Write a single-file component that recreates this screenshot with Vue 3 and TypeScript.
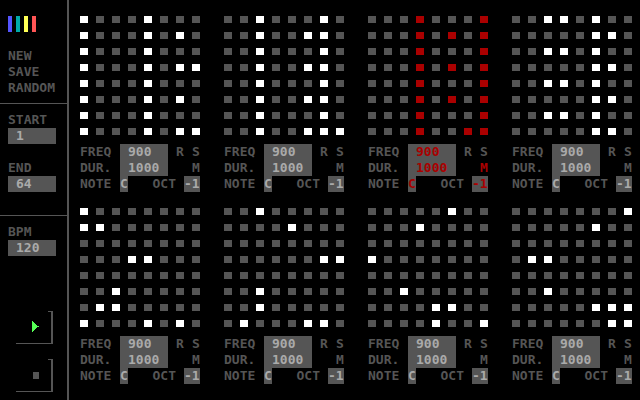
<script setup lang="ts">
import { reactive, ref } from 'vue'

interface Track {
  steps: boolean[][]
  freq: string
  duration: string
  note: string
  octave: string
  muted: boolean
}

const patterns: string[][] = [
  ['x...x...', 'x...x.x.', 'x...x...', 'x...x.xx', 'x...x...', 'x...x.x.', 'x...x...', 'x...x.xx'],
  ['..x...x.', '..x..xx.', '..x...x.', '..x..xx.', '..x...x.', '..x..xx.', '..x...x.', '..x..xxx'],
  ['...x...x', '...x.x.x', '...x...x', '...x.x.x', '...x...x', '...x.x.x', '...x...x', '...x..xx'],
  ['..xx.x..', '.....xx.', '..xx.x..', '.....xx.', '..xx.x..', '.....xx.', '..xx.x..', '.....xx.'],
  ['x.......', 'xx......', '........', '...xx...', '........', '..x.....', '.xx.....', 'x...x.x.'],
  ['..x.....', '....x...', '........', '......xx', '........', '..x.....', '..x.....', '.x...xx.'],
  ['.....x..', '...x....', '........', 'x.......', '........', '..x.....', '....xx..', '....x..x'],
  ['.......x', '.....x..', '........', '.xx.....', '........', '..x.....', '.....xxx', '......xx'],
]

const tracks = reactive<Track[]>(
  patterns.map((rows, i) => ({
    steps: rows.map((row) => [...row].map((c) => c === 'x')),
    freq: '900',
    duration: '1000',
    note: 'C',
    octave: '-1',
    muted: i === 2,
  })),
)

const start = ref('1')
const end = ref('64')
const bpm = ref('120')
const playing = ref(true)

function fill(track: Track, value: () => boolean) {
  track.steps = track.steps.map((row) => row.map(value))
}
function clearAll() {
  tracks.forEach((t) => fill(t, () => false))
}
function randomizeAll() {
  tracks.forEach((t) => fill(t, () => Math.random() < 0.25))
}
function save() {
  return JSON.stringify(tracks)
}
</script>

<template>
  <div class="app">
    <aside class="sidebar">
      <section class="panel file">
        <div class="logo"><i class="blue"></i><i class="cyan"></i><i class="yellow"></i><i class="red"></i></div>
        <nav class="menu">
          <button @click="clearAll">NEW</button>
          <button @click="save">SAVE</button>
          <button @click="randomizeAll">RANDOM</button>
        </nav>
      </section>
      <section class="panel range">
        <div class="setting">
          <label for="start">START</label>
          <input id="start" v-model="start" class="value" />
        </div>
        <div class="setting">
          <label for="end">END</label>
          <input id="end" v-model="end" class="value" />
        </div>
      </section>
      <section class="panel tempo">
        <div class="setting">
          <label for="bpm">BPM</label>
          <input id="bpm" v-model="bpm" class="value" />
        </div>
      </section>
      <div class="transport">
        <button aria-label="Play" @click="playing = true">
          <svg width="37" height="33" viewBox="0 0 37 33" shape-rendering="crispEdges">
            <path class="edge" d="M32 0h5v33H0v-1h35V1h-3z" />
            <path
              :class="playing ? 'on' : 'edge'"
              d="M16 10h1v1h1v1h1v1h1v1h1v1h2v1h-2v1h-1v1h-1v1h-1v1h-1v1h-1z"
            />
          </svg>
        </button>
        <button aria-label="Stop" @click="playing = false">
          <svg width="37" height="33" viewBox="0 0 37 33" shape-rendering="crispEdges">
            <path class="edge" d="M32 0h5v33H0v-1h35V1h-3z" />
            <path class="edge" d="M17 13h6v7h-6z" />
          </svg>
        </button>
      </div>
    </aside>

    <main class="tracks">
      <section v-for="(track, t) in tracks" :key="t" class="track" :class="{ muted: track.muted }">
        <div class="pads">
          <template v-for="(row, r) in track.steps" :key="r">
            <button
              v-for="(on, c) in row"
              :key="c"
              class="pad"
              :class="{ on }"
              :aria-label="`Step ${r * 8 + c + 1}`"
              :aria-pressed="on"
              @click="row[c] = !on"
            ></button>
          </template>
        </div>
        <div class="row">
          <label :for="`freq-${t}`">FREQ</label>
          <input :id="`freq-${t}`" v-model="track.freq" class="value" />
          <div class="keys">
            <button @click="fill(track, () => Math.random() < 0.25)">R</button>
            <button>S</button>
          </div>
        </div>
        <div class="row">
          <label :for="`dur-${t}`">DUR.</label>
          <input :id="`dur-${t}`" v-model="track.duration" class="value" />
          <div class="keys">
            <button class="mute" @click="track.muted = !track.muted">M</button>
          </div>
        </div>
        <div class="row">
          <label :for="`note-${t}`">NOTE</label>
          <input :id="`note-${t}`" v-model="track.note" class="value note" />
          <div class="keys">
            <label :for="`oct-${t}`">OCT</label>
            <input :id="`oct-${t}`" v-model="track.octave" class="value octave" />
          </div>
        </div>
      </section>
    </main>
  </div>
</template>

<style>
body {
  margin: 0;
  background: #000;
}
</style>

<style scoped>
.app {
  display: flex;
  min-height: 100vh;
  background: #000;
  color: #555;
  font: bold 13px/16px "DejaVu Sans Mono", monospace;
}
button,
input {
  display: block;
  margin: 0;
  padding: 0;
  border: 0;
  border-radius: 0;
  background: none;
  color: inherit;
  font: inherit;
  text-align: left;
}
button {
  cursor: pointer;
}
label {
  display: block;
}
.value {
  box-sizing: border-box;
  width: 48px;
  height: 16px;
  padding-left: 8px;
  background: #555;
  color: #aaa;
}
.sidebar {
  display: flex;
  flex-direction: column;
  flex: none;
  border-right: 2px solid #555;
}
.panel {
  display: flex;
  flex-direction: column;
  gap: 16px;
  padding: 8px 11px 0 8px;
}
.file {
  padding-top: 16px;
  padding-bottom: 7px;
  border-bottom: 1px solid #555;
}
.range {
  padding-bottom: 23px;
  border-bottom: 1px solid #555;
}
.logo {
  display: flex;
  gap: 4px;
}
.logo i {
  width: 4px;
  height: 16px;
}
.blue { background: #55f; }
.cyan { background: #0aa; }
.yellow { background: #ff5; }
.red { background: #f55; }
.transport {
  display: flex;
  flex-direction: column;
  gap: 15px;
  margin-top: auto;
  padding: 16px 14px 8px 16px;
}
.transport svg {
  display: block;
}
.edge { fill: #555; }
.transport .on { fill: #5f5; }
.tracks {
  display: grid;
  flex: 1;
  grid-template-columns: repeat(4, minmax(120px, 1fr));
  align-content: start;
  gap: 16px 24px;
  padding: 16px 8px 16px 11px;
}
.pads {
  display: grid;
  grid-template-columns: repeat(8, 8px);
  justify-content: space-between;
  row-gap: 9px;
  padding-bottom: 9px;
}
.pad {
  width: 8px;
  height: 7px;
  background: #555;
}
.pad.on {
  background: #fff;
}
.muted .pad.on {
  background: #a00;
}
.row {
  display: flex;
}
.row > label {
  width: 40px;
}
.keys {
  display: flex;
  gap: 8px;
  margin-left: auto;
}
.keys button {
  width: 8px;
}
.value.note {
  width: 8px;
  padding: 0;
}
.value.octave {
  width: 16px;
  padding: 0;
}
.muted .value,
.muted .mute {
  color: #a00;
}
</style>
